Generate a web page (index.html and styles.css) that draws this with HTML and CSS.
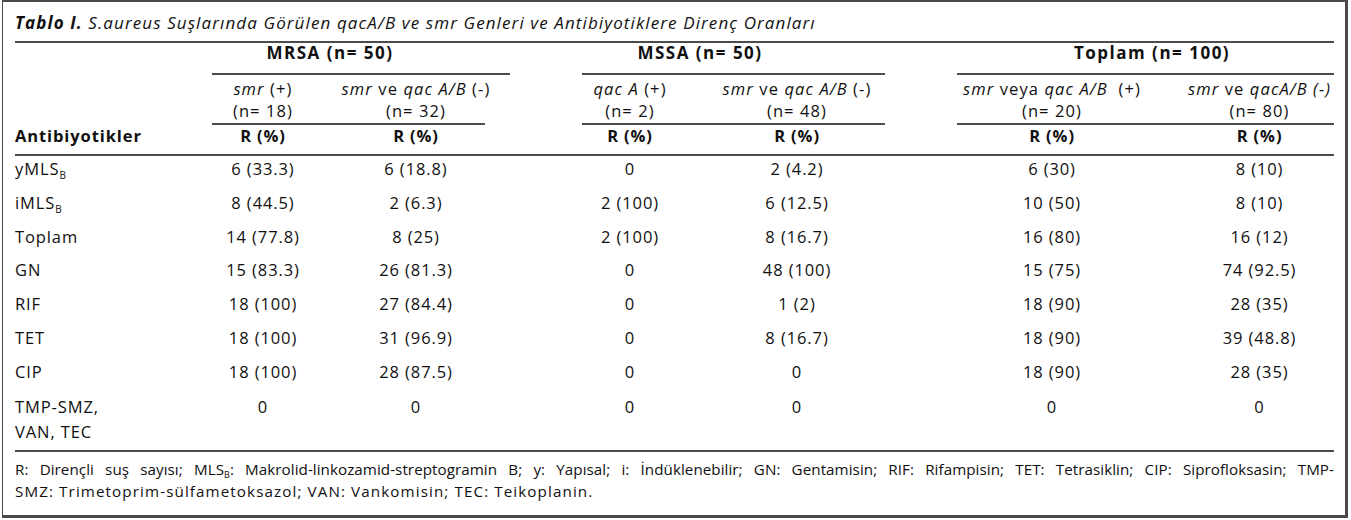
FILE: index.html
```html
<!DOCTYPE html>
<html lang="tr">
<head>
<meta charset="utf-8">
<title>Tablo I</title>
<link rel="stylesheet" href="styles.css">
</head>
<body>
<div class="frame">
  <div class="caption"><b>Tablo I.</b> S.aureus Suşlarında Görülen qacA/B ve smr Genleri ve Antibiyotiklere Direnç Oranları</div>
  <table class="tbl">
    <colgroup>
      <col class="w-label"><col class="w-c1"><col class="w-c2"><col class="w-gap"><col class="w-c3"><col class="w-c4"><col class="w-gap"><col class="w-c5"><col class="w-c6">
    </colgroup>
    <thead>
      <tr class="h1">
        <th class="lbl-head" rowspan="3">Antibiyotikler</th>
        <th class="grp grp-mrsa" colspan="2">MRSA (n= 50)</th>
        <th class="gap"></th>
        <th class="grp grp-mssa" colspan="2">MSSA (n= 50)</th>
        <th class="gap"></th>
        <th class="grp grp-top" colspan="2">Toplam (n= 100)</th>
      </tr>
      <tr class="h2">
        <td class="sh"><i>smr</i> (+)<br>(n= 18)</td>
        <td class="sh short c2"><i>smr</i> ve <i>qac A/B</i> (-)<br>(n= 32)</td>
        <td class="gap"></td>
        <td class="sh"><i>qac A</i> (+)<br>(n= 2)</td>
        <td class="sh c4"><i>smr</i> ve <i>qac A/B</i> (-)<br>(n= 48)</td>
        <td class="gap"></td>
        <td class="sh nw"><i>smr</i> veya <i>qac A/B</i>&nbsp; (+)<br>(n= 20)</td>
        <td class="sh c6 nw"><i>smr</i> ve <i>qacA/B (-)</i><br>(n= 80)</td>
      </tr>
      <tr class="h3">
        <th>R (%)</th>
        <th class="c2">R (%)</th>
        <th class="gap"></th>
        <th>R (%)</th>
        <th class="c4">R (%)</th>
        <th class="gap"></th>
        <th>R (%)</th>
        <th class="c6">R (%)</th>
      </tr>
    </thead>
    <tbody>
      <tr><td class="lbl">yMLS<sub class="sb">B</sub></td><td>6 (33.3)</td><td class="c2">6 (18.8)</td><td></td><td>0</td><td class="c4">2 (4.2)</td><td></td><td>6 (30)</td><td class="c6">8 (10)</td></tr>
      <tr><td class="lbl">iMLS<sub class="sb">B</sub></td><td>8 (44.5)</td><td class="c2">2 (6.3)</td><td></td><td>2 (100)</td><td class="c4">6 (12.5)</td><td></td><td>10 (50)</td><td class="c6">8 (10)</td></tr>
      <tr><td class="lbl">Toplam</td><td>14 (77.8)</td><td class="c2">8 (25)</td><td></td><td>2 (100)</td><td class="c4">8 (16.7)</td><td></td><td>16 (80)</td><td class="c6">16 (12)</td></tr>
      <tr><td class="lbl">GN</td><td>15 (83.3)</td><td class="c2">26 (81.3)</td><td></td><td>0</td><td class="c4">48 (100)</td><td></td><td>15 (75)</td><td class="c6">74 (92.5)</td></tr>
      <tr><td class="lbl">RIF</td><td>18 (100)</td><td class="c2">27 (84.4)</td><td></td><td>0</td><td class="c4">1 (2)</td><td></td><td>18 (90)</td><td class="c6">28 (35)</td></tr>
      <tr><td class="lbl">TET</td><td>18 (100)</td><td class="c2">31 (96.9)</td><td></td><td>0</td><td class="c4">8 (16.7)</td><td></td><td>18 (90)</td><td class="c6">39 (48.8)</td></tr>
      <tr><td class="lbl">CIP</td><td>18 (100)</td><td class="c2">28 (87.5)</td><td></td><td>0</td><td class="c4">0</td><td></td><td>18 (90)</td><td class="c6">28 (35)</td></tr>
      <tr class="last"><td class="lbl">TMP-SMZ,<br>VAN, TEC</td><td>0</td><td class="c2">0</td><td></td><td>0</td><td class="c4">0</td><td></td><td>0</td><td class="c6">0</td></tr>
    </tbody>
  </table>
  <div class="notes">
    <div class="note-line justified">R: Dirençli suş sayısı; MLS<sub class="sb-n">B</sub>: Makrolid-linkozamid-streptogramin B; y: Yapısal; i: İndüklenebilir; GN: Gentamisin; RIF: Rifampisin; TET: Tetrasiklin; CIP: Siprofloksasin; TMP-</div>
    <div class="note-line wide">SMZ: Trimetoprim-sülfametoksazol; VAN: Vankomisin; TEC: Teikoplanin.</div>
  </div>
</div>
</body>
</html>
```
FILE: styles.css
```css
* { box-sizing: border-box; }
html, body { margin: 0; padding: 0; background: #ffffff; }
body {
  font-family: "Open Sans", "Noto Sans", sans-serif;
  color: #111011;
}
.frame {
  margin-left: 2px;
  width: 1346px;
  height: 518px;
  border-style: solid;
  border-color: #4a4a4a;
  border-width: 2px 3px 3px 1px;
  padding: 0 11px 0 12px;
}
.caption {
  margin-top: 11px;
  margin-bottom: 8px;
  font-size: 17px;
  line-height: 20px;
  letter-spacing: 1.1px;
  font-style: italic;
  font-weight: 500;
  white-space: nowrap;
}
.caption b { font-weight: 700; }

.tbl {
  width: 1319px;
  table-layout: fixed;
  border-collapse: separate;
  border-spacing: 0;
  border-top: 2px solid #4c4c4c;
  font-size: 16.5px;
  letter-spacing: 0.9px;
}
.w-label { width: 197px; }
.w-c1 { width: 102px; }
.w-c2 { width: 196px; }
.w-gap { width: 72px; }
.w-c3 { width: 96px; }
.w-c4 { width: 207px; }
.w-c5 { width: 190px; }
.w-c6 { width: 187px; }

.tbl th, .tbl td {
  padding: 0;
  text-align: center;
  vertical-align: top;
  font-weight: 500;
  line-height: 20px;
  white-space: nowrap;
}
.tbl .c2 { padding-left: 8px; }
.tbl .c4 { padding-left: 31px; }
.tbl .c6 { padding-left: 38px; }

.h1 th.grp {
  font-size: 17px;
  letter-spacing: 1.5px;
  font-weight: 700;
  padding-bottom: 10px;
  border-bottom: 2px solid #4c4c4c;
}
.grp-mrsa { padding-right: 62px !important; }
.grp-mssa { padding-right: 67px !important; }
.grp-top { padding-left: 13px !important; }

.tbl .lbl-head {
  text-align: left;
  vertical-align: bottom;
  font-weight: 700;
  padding-bottom: 8px;
  border-bottom: 2px solid #4c4c4c;
}

.h2 td {
  line-height: 22px;
  padding-top: 3px;
  padding-bottom: 1px;
  letter-spacing: 1.1px;
}
.h2 td.sh { border-bottom: 2px solid #4c4c4c; }
.h2 td.sh.short {
  border-bottom: 0;
  padding-bottom: 3px;
  background: linear-gradient(#4c4c4c, #4c4c4c) no-repeat left bottom / calc(100% - 25px) 2px;
}

.h3 th {
  font-weight: 700;
  padding-top: 1px;
  padding-bottom: 8px;
  border-bottom: 2px solid #4c4c4c;
}

.tbl tbody td {
  padding-top: 3px;
  padding-bottom: 10.8px;
}
.tbl tbody td.lbl { text-align: left; }
.tbl tbody tr.last td {
  line-height: 25px;
  padding-top: 1px;
  padding-bottom: 6px;
  border-bottom: 2px solid #4c4c4c;
}
.sb {
  font-size: 10px;
  line-height: 0;
  vertical-align: -4px;
  letter-spacing: 0;
}

.notes {
  padding-top: 6px;
  font-size: 15.2px;
  line-height: 22px;
  font-weight: 500;
}
.note-line { white-space: nowrap; }
.note-line.justified {
  text-align: justify;
  text-align-last: justify;
  letter-spacing: 0.05px;
  word-spacing: -1px;
}
.note-line.wide { letter-spacing: 1.1px; }
.sb-n {
  font-size: 9px;
  line-height: 0;
  vertical-align: -3px;
}
```
